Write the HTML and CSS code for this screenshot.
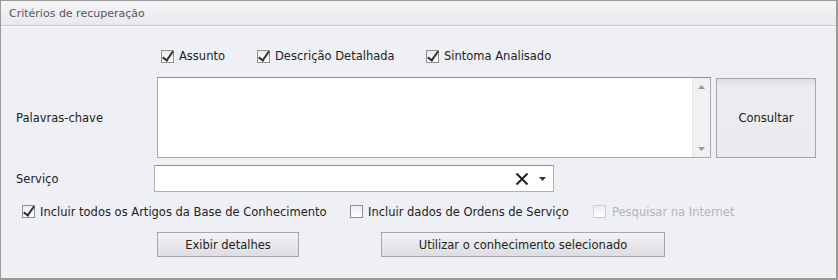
FILE: index.html
```html
<!DOCTYPE html>
<html lang="pt">
<head>
<meta charset="UTF-8" />
<title>Critérios de recuperação</title>
<link rel="stylesheet" href="styles.css">
</head>
<body>
  <div class="panel">
    <div class="panel-head">Critérios de recuperação</div>
    <div class="panel-body">
      <div class="row fields">
        <label class="check"><span class="box on"></span>Assunto</label>
        <label class="check"><span class="box on"></span>Descrição Detalhada</label>
        <label class="check"><span class="box on"></span>Sintoma Analisado</label>
      </div>

      <div class="row keywords">
        <div class="label">Palavras-chave</div>
        <div class="memo">
          <div class="memo-text"></div>
          <div class="scroll">
            <svg width="7" height="4" viewBox="0 0 7 4"><path d="M0 4L3.5 0L7 4z" fill="#9a9a9a"/></svg>
            <svg width="7" height="4" viewBox="0 0 7 4"><path d="M0 0L3.5 4L7 0z" fill="#9a9a9a"/></svg>
          </div>
        </div>
        <button class="btn big">Consultar</button>
      </div>

      <div class="row service">
        <div class="label">Serviço</div>
        <div class="combo">
          <svg class="clear" width="14" height="14" viewBox="0 0 14 14"><path d="M1.5 1.5L12.5 12.5M12.5 1.5L1.5 12.5" stroke="#222" stroke-width="2"/></svg>
          <svg class="drop" width="7" height="4" viewBox="0 0 7 4"><path d="M0 0L3.5 4L7 0z" fill="#333"/></svg>
        </div>
      </div>

      <div class="row options">
        <label class="check"><span class="box on"></span>Incluir todos os Artigos da Base de Conhecimento</label>
        <label class="check os"><span class="box"></span>Incluir dados de Ordens de Serviço</label>
        <label class="check off"><span class="box"></span>Pesquisar na Internet</label>
      </div>

      <div class="row actions">
        <button class="btn details">Exibir detalhes</button>
        <button class="btn use">Utilizar o conhecimento selecionado</button>
      </div>
    </div>
  </div>
</body>
</html>
```

FILE: styles.css
```css
* {
  box-sizing: border-box;
}
body {
  margin: 0;
  background: #fff;
  font-family: Tahoma, "DejaVu Sans", Verdana, sans-serif;
  font-size: 11.5px;
  color: #222;
}
.panel {
  width: 838px;
  height: 280px;
  border: 1px solid #9a9a9a;
  border-right-width: 2px;
  border-bottom-width: 2px;
  background: #eff0f5;
}
.panel-head {
  height: 25px;
  padding: 6px 8px 0;
  background: linear-gradient(#f6f6f8, #e9e9ee);
  border-bottom: 1px solid #c9c9d1;
  color: #555;
  font-size: 11px;
}
.panel-body {
  border-top: 1px solid #fafafc;
}
.row {
  display: flex;
  align-items: center;
}
.check {
  display: flex;
  align-items: center;
  gap: 5px;
  color: #222;
}
.box {
  width: 13px;
  height: 13px;
  border: 1px solid #8f8f8f;
  background: linear-gradient(#ececec, #fff);
  position: relative;
}
.box.on::after {
  content: "";
  position: absolute;
  left: 3px;
  top: -2px;
  width: 4px;
  height: 10px;
  border: solid #333;
  border-width: 0 2px 2px 0;
  transform: rotate(35deg);
}
.check.off {
  color: #b4b4b8;
}
.check.off .box {
  border-color: #cfcfd3;
}
.fields {
  padding: 18px 0 0 160px;
  height: 40px;
}
.fields .check:nth-child(1) { width: 96px; }
.fields .check:nth-child(2) { width: 169px; }
.keywords {
  margin-top: 10px;
  height: 81px;
}
.label {
  width: 156px;
  padding-left: 15px;
}
.memo {
  width: 554px;
  height: 81px;
  border: 1px solid #a8a8ae;
  border-top-color: #8e8e94;
  background: #fff;
  display: flex;
}
.memo-text {
  flex: 1;
}
.scroll {
  width: 18px;
  background: #f1f1f3;
  border-left: 1px solid #e6e6ea;
  display: flex;
  flex-direction: column;
  justify-content: space-between;
  align-items: center;
  padding: 7px 0 6px;
}
.btn {
  font-family: inherit;
  font-size: 11.5px;
  color: #222;
  border: 1px solid #a5a5ad;
  background: linear-gradient(#f4f4f6, #dcdce2);
  padding: 0;
}
.btn.big {
  margin-left: 5px;
  width: 100px;
  height: 80px;
  background: linear-gradient(#dcdce2 0, #ececf0 8px, #eaeaf0 100%);
}
.service {
  margin-top: 7px;
  height: 27px;
}
.service .label {
  width: 153px;
}
.combo {
  width: 400px;
  height: 27px;
  border: 1px solid #aeaeb4;
  border-top-color: #8e8e94;
  background: #fff;
  display: flex;
  align-items: center;
  justify-content: flex-end;
  padding-right: 7px;
}
.combo .clear {
  margin-right: 10px;
}
.options {
  margin-top: 11px;
  height: 17px;
  padding-left: 21px;
}
.options .check:nth-child(1) { width: 328px; }
.options .check.os { width: 243px; }
.options .check.off .box { margin-right: 1px; }
.actions {
  margin-top: 12px;
  padding-left: 156px;
}
.btn.details {
  width: 142px;
  height: 25px;
}
.btn.use {
  margin-left: 82px;
  width: 284px;
  height: 25px;
}
```
